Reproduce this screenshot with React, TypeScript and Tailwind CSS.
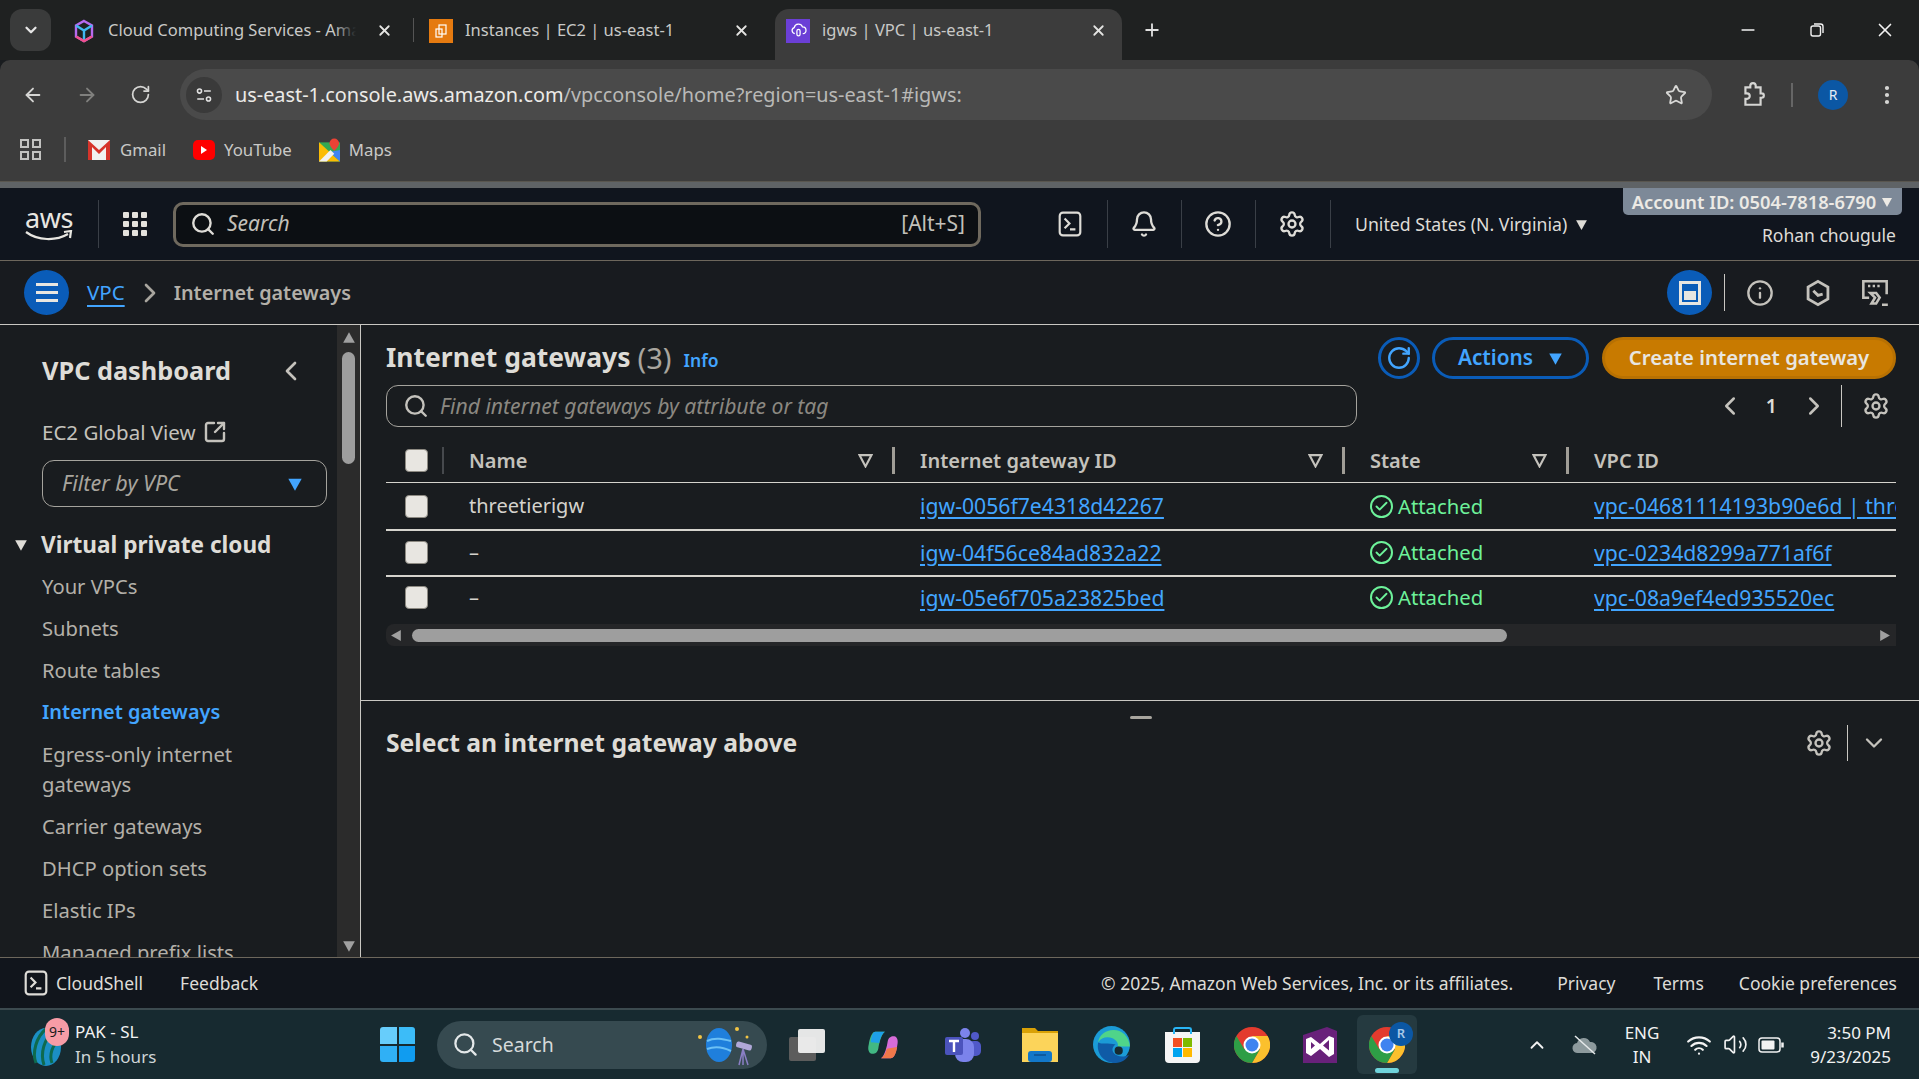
import {
  ArrowLeft,
  ArrowRight,
  Bell,
  Check,
  ChevronDown,
  ChevronLeft,
  ChevronRight,
  ChevronUp,
  CircleHelp,
  Info,
  Minus,
  MoreVertical,
  Plus,
  RotateCw,
  Search,
  Settings,
  SquareArrowOutUpRight,
  Star,
  Volume2,
  Wifi,
  X,
} from "lucide-react";

const sidebarLinks = ["Your VPCs", "Subnets", "Route tables"];
const sidebarLinksAfter = ["Carrier gateways", "DHCP option sets", "Elastic IPs", "Managed prefix lists"];

const rows = [
  { name: "threetierigw", igw: "igw-0056f7e4318d42267", vpc: "vpc-04681114193b90e6d | threetiervpc", h: "h-[48px]", line: true },
  { name: "–", igw: "igw-04f56ce84ad832a22", vpc: "vpc-0234d8299a771af6f", h: "h-[46px] pb-[1px]", line: true },
  { name: "–", igw: "igw-05e6f705a23825bed", vpc: "vpc-08a9ef4ed935520ec", h: "h-[41px]", line: false },
];

function ShellIcon({ className }: { className?: string }) {
  return (
    <svg viewBox="0 0 24 24" fill="none" stroke="currentColor" strokeWidth="2" className={className}>
      <rect x="2.5" y="1.5" width="19" height="21" rx="3" />
      <path d="M7 7l4.5 4.5L7 16M12 17h5" />
    </svg>
  );
}

function Caret({ className }: { className?: string }) {
  return (
    <svg viewBox="0 0 12 12" className={className} fill="currentColor">
      <path d="M1 2h10L6 11z" />
    </svg>
  );
}

function FilterCaret() {
  return (
    <svg viewBox="0 0 14 14" className="h-[15px] w-[15px] text-[#c4c2bc]" fill="none" stroke="currentColor" strokeWidth="2">
      <path d="M1.500 2h11L7 12.500z" />
    </svg>
  );
}

function Checkbox() {
  return <div className="h-[23px] w-[23px] rounded-[4px] border border-[#8d8a82] bg-[#e8e6e1]" />;
}

function ChromeIcon({ size = 36 }: { size?: number }) {
  return (
    <svg viewBox="0 0 36 36" width={size} height={size}>
      <circle cx="18" cy="18" r="18" fill="#e33b2e" />
      <path d="M18 36a18 18 0 0 0 15.600-27H18l7.800 13.500z" fill="#fbc02d" />
      <path d="M2.400 9A18 18 0 0 0 18 36l7.800-13.500L10.200 22z" fill="#2e9e46" />
      <circle cx="18" cy="18" r="8.500" fill="#fff" />
      <circle cx="18" cy="18" r="6.500" fill="#3f83f0" />
    </svg>
  );
}

function Tab({
  title,
  icon,
  active,
  fade,
  className,
}: {
  title: string;
  icon: React.ReactNode;
  active?: boolean;
  fade?: boolean;
  className: string;
}) {
  return (
    <div className={`flex h-[51px] shrink-0 items-center rounded-t-[14px] pb-[8px] ${className} ${active ? "bg-[#3c3c3c]" : ""}`}>
      <div className="h-[24px] w-[24px] shrink-0">{icon}</div>
      <div className="relative ml-[12px] min-w-0 flex-1 overflow-hidden whitespace-nowrap text-[16.5px] text-[#c9c9c7]">
        {title}
        {fade && <div className="absolute inset-y-0 right-0 w-[22px] bg-linear-to-r from-transparent to-[#1f2121]" />}
      </div>
      <X className="ml-[20px] h-[17px] w-[17px] shrink-0 text-[#e4e4e2]" strokeWidth={2.5} />
    </div>
  );
}

function ChromeFrame() {
  return (
    <>
      <div className="flex h-[60px] shrink-0 items-end bg-[#1f2121] pl-[10px]">
        <div className="mb-[9px] flex h-[42px] w-[41px] items-center justify-center rounded-[12px] bg-[#3a3b3b]">
          <ChevronDown className="h-[18px] w-[18px] text-[#e6e6e6]" strokeWidth={3} />
        </div>
        <div className="ml-[10px] flex items-end">
          <Tab
            fade
            className="w-[352px] pl-[11px] pr-[20px]"
            title="Cloud Computing Services - Amazon"
            icon={
              <svg viewBox="0 0 24 24" fill="none" strokeWidth="2.400">
                <path d="M12 2l8 4.500v11L12 22l-8-4.500v-11z" stroke="#b66bf0" />
                <path d="M4 6.500l8 5 8-5M12 11.500V22" stroke="#3fb8f0" />
                <path d="M4 17.500L12 22l8-4.500" stroke="#f0508c" />
              </svg>
            }
          />
          <div className="mb-[18px] h-[24px] w-px bg-[#555]" />
          <Tab
            className="w-[356px] pl-[15px] pr-[20px]"
            title="Instances | EC2 | us-east-1"
            icon={
              <div className="flex h-[24px] w-[24px] items-center justify-center bg-[#e57a10]">
                <svg viewBox="0 0 16 16" className="h-[16px] w-[16px]" fill="none" stroke="#fff" strokeWidth="1.200">
                  <rect x="6" y="2" width="7" height="9" />
                  <rect x="3" y="6" width="6" height="8" />
                </svg>
              </div>
            }
          />
          <div className="w-[5px]" />
          <Tab
            active
            className="w-[347px] pl-[11px] pr-[15px]"
            title="igws | VPC | us-east-1"
            icon={
              <div className="flex h-[24px] w-[24px] items-center justify-center bg-[#6b3fd6]">
                <svg viewBox="0 0 16 16" className="h-[17px] w-[17px]" fill="none" stroke="#fff" strokeWidth="1.200">
                  <path d="M4.500 11A3 3 0 0 1 4 5.200a4 4 0 0 1 7.700-.6A3.200 3.200 0 0 1 12 11" />
                  <rect x="6.500" y="7" width="3" height="6" rx="1.500" />
                </svg>
              </div>
            }
          />
        </div>
        <Plus className="mb-[20px] ml-[20px] h-[20px] w-[20px] text-[#e0e0e0]" strokeWidth={2.2} />
        <div className="flex-1" />
        <div className="mb-[19px] flex items-center pr-[23px] text-[#f2f2f2]">
          <Minus className="h-[20px] w-[20px]" strokeWidth={2} />
          <svg viewBox="0 0 16 16" className="ml-[51px] h-[16px] w-[16px]" fill="none" stroke="currentColor" strokeWidth="1.400">
            <rect x="2" y="4" width="9.500" height="10" rx="2" />
            <path d="M5 2h6.500A2.500 2.500 0 0 1 14 4.500V11" />
          </svg>
          <X className="ml-[49px] h-[22px] w-[22px]" strokeWidth={1.8} />
        </div>
      </div>

      <div className="flex h-[60px] shrink-0 items-start rounded-t-[10px] bg-[#3c3c3c] pt-[9px] text-[#d5d5d3]">
        <div className="flex h-[51px] items-center">
          <ArrowLeft className="ml-[22px] h-[22px] w-[22px]" strokeWidth={2} />
          <ArrowRight className="ml-[32px] h-[22px] w-[22px] text-[#80807e]" strokeWidth={2} />
          <RotateCw className="ml-[32px] h-[21px] w-[21px]" strokeWidth={2} />
          <div className="ml-[29px] flex h-[51px] w-[1532px] items-center rounded-full bg-[#4a4a4a] pl-[6px] pr-[25px]">
            <div className="flex h-[36px] w-[36px] items-center justify-center rounded-full bg-[#3a3a3a]">
              <svg viewBox="0 0 16 16" className="h-[18px] w-[18px]" fill="none" stroke="#e2e2e2" strokeWidth="1.400">
                <circle cx="4" cy="4.500" r="1.800" />
                <path d="M8 4.500h6M2 11.500h6" />
                <circle cx="12" cy="11.500" r="1.800" />
              </svg>
            </div>
            <div className="ml-[13px] flex-1 whitespace-nowrap text-[19.85px] text-[#b9b9b7]">
              <span className="text-[#ecebe8]">us-east-1.console.aws.amazon.com</span>/vpcconsole/home?region=us-east-1#igws:
            </div>
            <Star className="h-[22px] w-[22px] text-[#d8d8d6]" strokeWidth={2} />
          </div>
          <svg viewBox="0 0 24 24" className="ml-[28px] h-[26px] w-[26px]" fill="none" stroke="currentColor" strokeWidth="2">
            <path d="M5 5h4.500V3.500a2.500 2.500 0 0 1 5 0V5H19v5.500h1a2 2 0 0 1 0 4h-1V21H5v-5.500h1.500a2.500 2.500 0 0 0 0-5H5z" />
          </svg>
          <div className="ml-[25px] h-[24px] w-[2px] bg-[#666]" />
          <div className="ml-[25px] flex h-[30px] w-[30px] items-center justify-center rounded-full bg-[#0b57a4] text-[14px] text-[#e4ecf5]">R</div>
          <MoreVertical className="ml-[27px] h-[24px] w-[24px]" strokeWidth={2.2} />
        </div>
      </div>

      <div className="flex h-[61px] shrink-0 items-center bg-[#3c3c3c] pb-[2px] text-[16.8px] text-[#c9c9c7]">
        <div className="ml-[20px] grid h-[21px] w-[21px] grid-cols-2 gap-[3px]">
          <div className="border-2 border-[#c2c2c0]" />
          <div className="border-2 border-[#c2c2c0]" />
          <div className="border-2 border-[#c2c2c0]" />
          <div className="border-2 border-[#c2c2c0]" />
        </div>
        <div className="ml-[23px] h-[25px] w-[2px] bg-[#5d5d5d]" />
        <svg viewBox="0 0 22 20" className="ml-[22px] h-[20px] w-[22px]">
          <rect width="22" height="20" fill="#f1f1f1" />
          <path d="M0 0l11 10L22 0v20h-4V7l-7 7-7-7v13H0z" fill="#d6342b" />
        </svg>
        <span className="ml-[10px]">Gmail</span>
        <div className="ml-[27px] flex h-[20px] w-[22px] items-center justify-center rounded-[5px] bg-[#f00]">
          <div className="h-0 w-0 border-y-[4px] border-l-[6px] border-y-transparent border-l-white" />
        </div>
        <span className="ml-[9px]">YouTube</span>
        <svg viewBox="0 0 22 24" className="ml-[27px] h-[24px] w-[21px]">
          <path d="M0 4h22v20H0z" fill="#34a853" />
          <path d="M0 4l22 20H0z" fill="#fbbc04" />
          <path d="M11 14l11 10V12z" fill="#4285f4" />
          <path d="M0 24L12 12l4 4-8 8z" fill="#f1f1f1" />
          <path d="M16 0a5 5 0 0 1 5 5c0 3-5 8-5 8s-5-5-5-8a5 5 0 0 1 5-5z" fill="#ea4335" />
        </svg>
        <span className="ml-[9px]">Maps</span>
      </div>
      <div className="h-[1px] shrink-0 bg-[#59564f]" />
      <div className="h-[6px] shrink-0 bg-[#5f6366]" />
    </>
  );
}

function AwsHeader() {
  return (
    <div className="flex h-[73px] shrink-0 items-center border-b border-[#6d675c] bg-[#10151e] text-[#dedcd7]">
      <div className="ml-[25px] flex h-[47px] w-[48px] flex-col items-center justify-center">
        <span className="text-[27px] leading-[24px] tracking-[-0.5px] text-[#e8e6e1]">aws</span>
        <svg viewBox="0 0 48 12" className="h-[12px] w-[48px]" fill="none" stroke="#e8e6e1" strokeWidth="2.200">
          <path d="M1 2c12 9 30 9 42 2" />
          <path d="M39 2l7-1-1 7" />
        </svg>
      </div>
      <div className="ml-[25px] h-[48px] w-px bg-[#3a3f47]" />
      <div className="ml-[24px] grid h-[24px] w-[24px] grid-cols-3 gap-[3px]">
        {Array.from({ length: 9 }).map((_, i) => (
          <div key={i} className="rounded-[1px] bg-[#e4e2dd]" />
        ))}
      </div>
      <div className="ml-[26px] flex h-[45px] w-[808px] items-center rounded-[10px] border-[3px] border-[#6f695e] bg-[#0c0f13] pl-[14px] pr-[13px] text-[#c2c0ba]">
        <Search className="h-[26px] w-[26px] text-[#dedcd7]" strokeWidth={2.2} />
        <span className="ml-[11px] flex-1 text-[21px] italic">Search</span>
        <span className="text-[21px]">[Alt+S]</span>
      </div>
      <ShellIcon className="ml-[76px] h-[26px] w-[26px]" />
      <div className="ml-[24px] h-[48px] w-px bg-[#3a3f47]" />
      <Bell className="ml-[22px] h-[28px] w-[28px]" strokeWidth={2} />
      <div className="ml-[23px] h-[48px] w-px bg-[#3a3f47]" />
      <CircleHelp className="ml-[22px] h-[28px] w-[28px]" strokeWidth={2} />
      <div className="ml-[23px] h-[48px] w-px bg-[#3a3f47]" />
      <Settings className="ml-[22px] h-[28px] w-[28px]" strokeWidth={2} />
      <div className="ml-[24px] h-[48px] w-px bg-[#3a3f47]" />
      <span className="ml-[24px] whitespace-nowrap text-[17.7px]">United States (N. Virginia)</span>
      <Caret className="ml-[8px] h-[13px] w-[13px]" />
      <div className="ml-[29px] flex h-[72px] flex-1 flex-col items-end pr-[23px]">
        <div className="mr-[-6px] flex h-[27px] w-[279px] items-center justify-center gap-[5px] rounded-b-[5px] bg-[#7d8998] text-[18.3px] font-semibold text-[#eceae5]">
          Account ID: 0504-7818-6790
          <Caret className="h-[12px] w-[12px]" />
        </div>
        <span className="mt-[8px] text-[17.5px] leading-[24px]">Rohan chougule</span>
      </div>
    </div>
  );
}

function Breadcrumbs() {
  return (
    <div className="flex h-[64px] shrink-0 items-center border-b border-[#c9c7c2] bg-[#181b1f]">
      <div className="ml-[24px] flex h-[45px] w-[45px] items-center justify-center rounded-full bg-[#0a5cb8]">
        <div className="flex w-[22px] flex-col gap-[5px]">
          <div className="h-[3px] bg-[#e8e6e1]" />
          <div className="h-[3px] bg-[#e8e6e1]" />
          <div className="h-[3px] bg-[#e8e6e1]" />
        </div>
      </div>
      <a className="ml-[18px] text-[20.5px] text-[#42a5ff] underline underline-offset-[5px]">VPC</a>
      <ChevronRight className="ml-[9px] h-[32px] w-[32px] text-[#a8a59e]" strokeWidth={2} />
      <span className="ml-[8px] text-[19.8px] font-semibold text-[#b3b0a9]">Internet gateways</span>
      <div className="flex-1" />
      <div className="flex h-[45px] w-[45px] items-center justify-center rounded-full bg-[#0a5cb8]">
        <div className="flex h-[24px] w-[22px] items-end border-[3px] border-[#e8e6e1] p-[2px]">
          <div className="h-[9px] w-full bg-[#e8e6e1]" />
        </div>
      </div>
      <div className="ml-[12px] h-[37px] w-px bg-[#c9c7c2]" />
      <Info className="ml-[21px] h-[28px] w-[28px] text-[#c4c2bc]" strokeWidth={2} />
      <svg viewBox="0 0 24 24" className="ml-[30px] h-[28px] w-[28px] text-[#c4c2bc]" fill="none" stroke="currentColor" strokeWidth="2.400">
        <path d="M12 2l8.500 5v10L12 22l-8.500-5V7z" />
        <path d="M8 10l4 4 4-1" />
      </svg>
      <svg viewBox="0 0 24 24" className="ml-[29px] mr-[30px] h-[28px] w-[28px] text-[#c4c2bc]" fill="none" stroke="currentColor" strokeWidth="2.200">
        <path d="M7 16H2V2h20v11" />
        <path d="M6 6h2M10 6h2M14 6h2" />
        <path d="M8 12h5l3 4-3 5H9l3-5zM18 22h5" />
      </svg>
    </div>
  );
}

function Sidebar() {
  return (
    <div className="flex w-[361px] shrink-0 border-r border-[#c9c7c2]">
      <div className="h-full w-[337px] shrink-0 overflow-hidden text-[20.2px] text-[#b3b0a9]">
        <div className="mt-[30px] flex h-[32px] items-center justify-between pl-[42px] pr-[30px]">
          <span className="text-[25.3px] font-bold text-[#dedcd7]">VPC dashboard</span>
          <ChevronLeft className="h-[32px] w-[32px] text-[#c4c2bc]" strokeWidth={2} />
        </div>
        <div className="mt-[30px] flex h-[30px] items-center pl-[42px] text-[20.5px] text-[#c4c2bc]">
          EC2 Global View
          <SquareArrowOutUpRight className="ml-[7px] h-[24px] w-[24px]" strokeWidth={2.4} />
        </div>
        <div className="ml-[42px] mt-[13px] flex h-[47px] w-[285px] items-center rounded-[12px] border border-[#a5a39d] pl-[19px] pr-[23px]">
          <span className="flex-1 text-[21.5px] italic text-[#a8a59e]">Filter by VPC</span>
          <Caret className="h-[16px] w-[16px] text-[#42a5ff]" />
        </div>
        <div className="mt-[22px] flex h-[32px] items-center pl-[14px]">
          <Caret className="h-[14px] w-[14px] text-[#dedcd7]" />
          <span className="ml-[13px] text-[22.6px] font-bold leading-[32px] text-[#dedcd7]">Virtual private cloud</span>
        </div>
        <div className="mt-[4px] flex flex-col pl-[42px]">
          {sidebarLinks.map((link) => (
            <div key={link} className="flex h-[42px] items-center">{link}</div>
          ))}
          <div className="flex h-[42px] items-center text-[19.9px] font-semibold text-[#42a5ff]">Internet gateways</div>
          <div className="py-[6px] leading-[30px]">
            Egress-only internet
            <br />
            gateways
          </div>
          {sidebarLinksAfter.map((link) => (
            <div key={link} className="flex h-[42px] shrink-0 items-center whitespace-nowrap">{link}</div>
          ))}
        </div>
      </div>
      <div className="flex w-[23px] flex-col items-center bg-[#2b2b2b]">
        <Caret className="mt-[6px] h-[14px] w-[14px] rotate-180 text-[#a0a0a0]" />
        <div className="mt-[7px] h-[112px] w-[13px] rounded-full bg-[#9e9e9e]" />
        <div className="flex-1" />
        <Caret className="mb-[4px] h-[14px] w-[14px] text-[#a0a0a0]" />
      </div>
    </div>
  );
}

function HeaderCell({ label, sep = true }: { label: string; sep?: boolean }) {
  return (
    <div className="flex h-full items-center font-semibold text-[#c4c2bc]">
      <span className="flex-1 whitespace-nowrap">{label}</span>
      {sep && (
        <>
          <FilterCaret />
          <div className="ml-[19px] mr-[25px] h-[27px] w-[3px] bg-[#a09d96]" />
        </>
      )}
    </div>
  );
}

function GatewayTable() {
  return (
    <div className="mt-[14px] overflow-hidden text-[20px]">
      <div className="grid h-[42px] grid-cols-[83px_451px_450px_224px_minmax(0,1fr)] border-b border-[#d5d3cd] pb-[2px]">
        <div className="flex items-center pl-[19px]">
          <Checkbox />
          <div className="ml-[14px] h-[27px] w-[2px] bg-[#46494d]" />
        </div>
        <HeaderCell label="Name" />
        <HeaderCell label="Internet gateway ID" />
        <HeaderCell label="State" />
        <HeaderCell label="VPC ID" sep={false} />
      </div>
      {rows.map((row) => (
        <div
          key={row.igw}
          className={`grid grid-cols-[83px_451px_450px_224px_minmax(0,1fr)] items-center ${row.h} ${
            row.line ? "border-b-2 border-[#d5d3cd]" : ""
          }`}
        >
          <div className="pl-[19px]">
            <Checkbox />
          </div>
          <div className="text-[#d5d3cd]">{row.name}</div>
          <a className="text-[21.2px] text-[#42a5ff] underline underline-offset-[3px]">{row.igw}</a>
          <div className="flex items-center gap-[5px] text-[20.3px] text-[#6df29a]">
            <div className="flex h-[23px] w-[23px] items-center justify-center rounded-full border-2 border-[#6df29a]">
              <Check className="h-[15px] w-[15px]" strokeWidth={3} />
            </div>
            Attached
          </div>
          <a className="overflow-hidden whitespace-nowrap text-[21.2px] text-[#42a5ff] underline underline-offset-[3px]">{row.vpc}</a>
        </div>
      ))}
      <div className="mt-[6px] flex h-[22px] items-center rounded-l-[8px] bg-[#252628]">
        <Caret className="ml-[4px] h-[13px] w-[13px] rotate-90 text-[#a0a0a0]" />
        <div className="ml-[9px] h-[13px] w-[1095px] rounded-full bg-[#9e9e9e]" />
        <div className="flex-1" />
        <Caret className="mr-[5px] h-[13px] w-[13px] -rotate-90 text-[#a0a0a0]" />
      </div>
    </div>
  );
}

function MainPane() {
  return (
    <div className="flex min-w-0 flex-1 flex-col">
      <div className="h-[376px] shrink-0 border-b border-[#c9c7c2] pl-[25px] pr-[23px] pt-[12px]">
        <div className="flex h-[42px] items-center">
          <span className="text-[26.5px] font-bold text-[#dedcd7]">Internet gateways</span>
          <span className="ml-[7px] text-[29px] text-[#a8a59e]">(3)</span>
          <span className="ml-[12px] mt-[5px] text-[17.5px] font-semibold text-[#42a5ff]">Info</span>
          <div className="flex-1" />
          <div className="flex h-[42px] w-[42px] items-center justify-center rounded-full border-[3px] border-[#0a5cb8]">
            <RotateCw className="h-[26px] w-[26px] text-[#42a5ff]" strokeWidth={2.2} />
          </div>
          <div className="ml-[12px] flex h-[42px] w-[157px] items-center justify-center gap-[15px] rounded-full border-[3px] border-[#0a5cb8] text-[20.8px] font-semibold text-[#42a5ff]">
            Actions
            <Caret className="h-[15px] w-[15px]" />
          </div>
          <div className="ml-[13px] flex h-[42px] w-[294px] items-center justify-center rounded-full border-[3px] border-[#b87102] bg-[#c87a00] pb-[2px] text-[20.3px] font-semibold text-[#e8e6e1]">
            Create internet gateway
          </div>
        </div>
        <div className="mt-[6px] flex h-[42px] items-center">
          <div className="flex h-[42px] w-[971px] items-center rounded-[12px] border border-[#a5a39d] pl-[16px]">
            <Search className="h-[26px] w-[26px] text-[#c4c2bc]" strokeWidth={2.2} />
            <span className="ml-[11px] text-[21.1px] italic text-[#8b8881]">Find internet gateways by attribute or tag</span>
          </div>
          <div className="flex-1" />
          <ChevronLeft className="h-[30px] w-[30px] text-[#c4c2bc]" strokeWidth={2} />
          <span className="ml-[21px] text-[19.5px] font-semibold text-[#dedcd7]">1</span>
          <ChevronRight className="ml-[22px] h-[30px] w-[30px] text-[#c4c2bc]" strokeWidth={2} />
          <div className="ml-[12px] h-[42px] w-px bg-[#c9c7c2]" />
          <Settings className="ml-[20px] mr-[6px] h-[28px] w-[28px] text-[#c4c2bc]" strokeWidth={2} />
        </div>
        <GatewayTable />
      </div>
      <div className="flex-1 pl-[25px] pr-[23px]">
        <div className="mx-auto mt-[15px] h-[3px] w-[22px] rounded-full bg-[#a8a59e]" />
        <div className="mt-[3px] flex h-[42px] items-center">
          <span className="flex-1 text-[24.7px] font-bold text-[#dedcd7]">Select an internet gateway above</span>
          <Settings className="h-[28px] w-[28px] text-[#c4c2bc]" strokeWidth={2} />
          <div className="ml-[14px] h-[36px] w-px bg-[#c9c7c2]" />
          <ChevronDown className="ml-[12px] mr-[8px] h-[28px] w-[28px] text-[#c4c2bc]" strokeWidth={2} />
        </div>
      </div>
    </div>
  );
}

function Footer() {
  return (
    <div className="flex h-[51px] shrink-0 items-center border-t border-[#6d675c] bg-[#11151c] text-[17.5px] text-[#dedcd7]">
      <ShellIcon className="ml-[23px] h-[26px] w-[26px]" />
      <span className="ml-[7px]">CloudShell</span>
      <span className="ml-[37px]">Feedback</span>
      <div className="flex-1" />
      <span>© 2025, Amazon Web Services, Inc. or its affiliates.</span>
      <span className="ml-[44px]">Privacy</span>
      <span className="ml-[38px]">Terms</span>
      <span className="ml-[35px] mr-[22px]">Cookie preferences</span>
    </div>
  );
}

function TaskIcon({ children, className = "w-[70px]" }: { children: React.ReactNode; className?: string }) {
  return <div className={`flex h-full shrink-0 items-center justify-center ${className}`}>{children}</div>;
}

function Taskbar() {
  return (
    <div className="flex h-[71px] shrink-0 items-center border-t-2 border-[#3c4a4f] bg-[#172a30] text-[#f2f2f2]">
      <div className="relative ml-[30px] h-[44px] w-[32px] shrink-0">
        <svg viewBox="0 0 32 44" className="h-[44px] w-[32px]">
          <ellipse cx="16" cy="24" rx="15" ry="19" fill="#1b8fc4" />
          <path d="M6 40C2 30 6 14 16 6M14 42C10 30 14 16 24 8M22 40c-3-8 0-18 8-24" stroke="#0e6a4e" strokeWidth="3" fill="none" />
        </svg>
        <div className="absolute left-[15px] top-[-5px] flex h-[28px] w-[24px] items-center justify-center rounded-full bg-[#f79ca6] text-[14px] text-[#1c1c1c]">
          9+
        </div>
      </div>
      <div className="ml-[13px] mt-[-2px] w-[305px] shrink-0 text-[17px] leading-[25px]">
        <div>PAK - SL</div>
        <div className="text-[#cfd6d8]">In 5 hours</div>
      </div>
      <div className="grid h-[35px] w-[35px] shrink-0 grid-cols-2 gap-[2px]">
        <div className="rounded-tl-[3px] bg-[#67cdfb]" />
        <div className="rounded-tr-[3px] bg-[#3cbcf8]" />
        <div className="rounded-bl-[3px] bg-[#30b0f5]" />
        <div className="rounded-br-[3px] bg-[#109cf0]" />
      </div>
      <div className="ml-[22px] flex h-[48px] w-[330px] shrink-0 items-center rounded-full bg-[#364a50] pl-[15px] pr-[12px]">
        <Search className="h-[27px] w-[27px] text-[#e4e8e9]" strokeWidth={2} />
        <span className="ml-[13px] flex-1 text-[19.500px] text-[#d5dadb]">Search</span>
        <svg viewBox="0 0 60 44" className="h-[44px] w-[60px]">
          <ellipse cx="24" cy="22" rx="13" ry="17" fill="#1f7fdc" />
          <path d="M12 18c8-4 16-2 24 0M12 26c8-3 16-2 24 2" stroke="#6cc0f5" strokeWidth="2" fill="none" />
          <path d="M48 26l-4 16M48 26l0 16M48 26l5 16" stroke="#8a7fc4" strokeWidth="1.500" />
          <rect x="41" y="20" width="16" height="6" rx="2" fill="#b0a8d8" transform="rotate(15 49 23)" />
          <circle cx="5" cy="14" r="2" fill="#f3c544" />
          <circle cx="42" cy="6" r="2" fill="#f3c544" />
          <circle cx="52" cy="14" r="1.500" fill="#f3c544" />
        </svg>
      </div>
      <TaskIcon className="w-[80px]">
        <div className="relative h-[32px] w-[36px]">
          <div className="absolute bottom-0 left-0 h-[24px] w-[27px] rounded-[2px] bg-[#5c5c5c]" />
          <div className="absolute right-0 top-0 h-[24px] w-[27px] rounded-[2px] bg-[#f0f0f0] opacity-95" />
        </div>
      </TaskIcon>
      <TaskIcon className="w-[71px]">
        <svg viewBox="0 0 36 36" className="h-[34px] w-[34px]">
          <path d="M10 4h10c-4 3-6 12-7 18-1 5-5 6-8 5-3-2-3-6-2-10C4 11 6 4 10 4z" fill="#42b883" />
          <path d="M10 4h10c-3 2-5 7-6 12l-9-1C6 9 7 4 10 4z" fill="#1ea0e8" />
          <path d="M26 32H16c4-3 6-12 7-18 1-5 5-6 8-5 3 2 3 6 2 10-1 6-3 13-7 13z" fill="#d76cd8" />
          <path d="M26 32H16c3-2 5-6 6-10l11-2c-1 6-3 12-7 12z" fill="#f0784a" />
        </svg>
      </TaskIcon>
      <TaskIcon className="ml-[3px] w-[84px]">
        <svg viewBox="0 0 36 36" className="h-[38px] w-[36px]">
          <circle cx="20" cy="6" r="5" fill="#7b83eb" />
          <circle cx="30" cy="9" r="4" fill="#5059c9" />
          <rect x="24" y="14" width="12" height="15" rx="5" fill="#5059c9" />
          <rect x="10" y="12" width="19" height="23" rx="8" fill="#7b83eb" />
          <rect x="0" y="10" width="18" height="18" rx="2" fill="#4b53bc" />
          <path d="M4 14h10M9 14v11" stroke="#fff" strokeWidth="2.400" />
        </svg>
      </TaskIcon>
      <TaskIcon>
        <svg viewBox="0 0 36 34" className="h-[34px] w-[36px]">
          <path d="M0 0h13l3 3h20v31H0z" fill="#d9a106" />
          <path d="M0 5h36v29H0z" fill="#fcd45a" />
          <rect x="6" y="23" width="24" height="11" rx="3" fill="#1277c9" />
          <path d="M12 27h12" stroke="#0c4f8f" strokeWidth="1.500" />
        </svg>
      </TaskIcon>
      <TaskIcon className="w-[72px]">
        <svg viewBox="0 0 36 36" className="h-[37px] w-[37px]">
          <circle cx="18" cy="18" r="18" fill="#1b9bd6" />
          <path d="M36 20c-1-10-8-16-16-16-8 0-14 5-15 12 3-5 9-6 14-4 4 2 6 5 5 8z" fill="#4fd48a" />
          <path d="M5 16C3 26 10 36 22 36c6 0 11-4 13-8-5 3-12 2-15-2-2-3-1-6 2-8-7-2-14 0-17-2z" fill="#0f5ba6" />
          <circle cx="25" cy="24" r="4" fill="#172a30" />
        </svg>
      </TaskIcon>
      <TaskIcon>
        <div className="relative mt-[6px] flex h-[31px] w-[35px] items-center justify-center rounded-b-[4px] bg-[#f5f5f5]">
          <div className="absolute left-[8px] top-[-5px] h-[7px] w-[19px] rounded-t-[3px] border-2 border-b-0 border-[#29b6f6]" />
          <div className="grid grid-cols-2 gap-[1px]">
            <div className="h-[9px] w-[9px] bg-[#f25022]" />
            <div className="h-[9px] w-[9px] bg-[#7fba00]" />
            <div className="h-[9px] w-[9px] bg-[#00a4ef]" />
            <div className="h-[9px] w-[9px] bg-[#ffb900]" />
          </div>
        </div>
      </TaskIcon>
      <TaskIcon>
        <ChromeIcon />
      </TaskIcon>
      <TaskIcon className="w-[66px]">
        <svg viewBox="0 0 34 36" className="h-[36px] w-[34px]">
          <path d="M0 8l24-8 10 4v32H0z" fill="#68217a" />
          <path d="M3 12l5-2 9 7 9-8 5 2v16l-5 3-9-8-9 7-5-3z" fill="#fff" />
          <path d="M8 15v7l4-3.500zM26 13l-6 5.500 6 5z" fill="#68217a" />
        </svg>
      </TaskIcon>
      <div className="relative ml-[4px] flex h-[59px] w-[60px] shrink-0 items-center justify-center rounded-[6px] bg-[#253a40]">
        <ChromeIcon />
        <div className="absolute right-[4px] top-[7px] flex h-[24px] w-[24px] items-center justify-center rounded-full bg-[#0b57a4] text-[13px] font-semibold text-[#a8c8e8]">
          R
        </div>
        <div className="absolute bottom-[1px] h-[5px] w-[24px] rounded-full bg-[#6fd3dc]" />
      </div>
      <ChevronUp className="ml-[109px] h-[22px] w-[22px] shrink-0" strokeWidth={2} />
      <svg viewBox="0 0 26 20" className="ml-[24px] h-[20px] w-[26px] shrink-0">
        <path d="M6 18a5 5 0 0 1-1-10 7 7 0 0 1 13-1 5.500 5.500 0 0 1 2 11z" fill="#8d9a9d" />
        <path d="M3 1l20 18" stroke="#e6e9ea" strokeWidth="1.500" />
      </svg>
      <div className="ml-[22px] w-[44px] shrink-0 text-center text-[17px] leading-[24px]">
        ENG
        <br />
        IN
      </div>
      <Wifi className="ml-[22px] h-[26px] w-[26px] shrink-0" strokeWidth={2} />
      <Volume2 className="ml-[11px] h-[25px] w-[25px] shrink-0" strokeWidth={1.6} />
      <svg viewBox="0 0 26 16" className="ml-[10px] h-[16px] w-[26px] shrink-0" fill="none" stroke="currentColor" strokeWidth="1.500">
        <rect x="1" y="1" width="21" height="14" rx="3" />
        <rect x="3.500" y="3.500" width="13" height="9" rx="1" fill="currentColor" stroke="none" />
        <path d="M24.500 5.500v5" strokeWidth="2.500" />
      </svg>
      <div className="ml-[21px] w-[86px] shrink-0 whitespace-nowrap text-right text-[17px] leading-[24px]">
        3:50 PM
        <br />
        9/23/2025
      </div>
    </div>
  );
}

export default function App() {
  return (
    <div className="flex h-[1079px] w-[1919px] flex-col overflow-hidden bg-[#191c1f] font-['Noto_Sans',sans-serif]">
      <ChromeFrame />
      <AwsHeader />
      <Breadcrumbs />
      <div className="flex min-h-0 flex-1">
        <Sidebar />
        <MainPane />
      </div>
      <Footer />
      <Taskbar />
    </div>
  );
}
